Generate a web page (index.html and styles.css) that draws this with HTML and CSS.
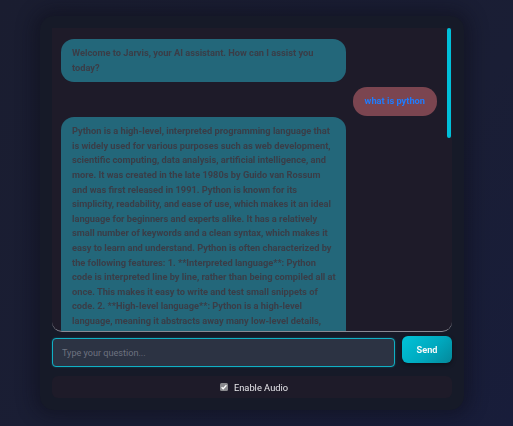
FILE: index.html
```html
<!DOCTYPE html>
<html lang="en">
<head>
<meta charset="utf-8">
<title>Jarvis</title>
<link rel="stylesheet" href="styles.css">
</head>
<body>
<div class="card">
  <div class="chat-wrap">
    <div class="chat">
      <div class="msg bot first">Welcome to Jarvis, your AI assistant. How can I assist you today?</div>
      <div class="row-user"><div class="msg user">what is python</div></div>
      <div class="msg bot">Python is a high-level, interpreted programming language that is widely used for various purposes such as web development, scientific computing, data analysis, artificial intelligence, and more. It was created in the late 1980s by Guido van Rossum and was first released in 1991. Python is known for its simplicity, readability, and ease of use, which makes it an ideal language for beginners and experts alike. It has a relatively small number of keywords and a clean syntax, which makes it easy to learn and understand. Python is often characterized by the following features: 1. **Interpreted language**: Python code is interpreted line by line, rather than being compiled all at once. This makes it easy to write and test small snippets of code. 2. **High-level language**: Python is a high-level language, meaning it abstracts away many low-level details, such as memory management, allowing developers to focus on the logic of their programs. 3. **Object-oriented**: Python supports object-oriented programming, which allows developers to organize code into reusable classes and objects.</div>
    </div>
    <div class="thumb"></div>
  </div>
  <div class="input-row">
    <input class="question" type="text" placeholder="Type your question..." autofocus>
    <button class="send" type="button">Send</button>
  </div>
  <div class="audio">
    <label class="audio-label"><span class="audio-check"><svg viewBox="0 0 8 8" width="8" height="8"><path d="M1.6 4.2 L3.2 5.8 L6.4 2.3" fill="none" stroke="#ffffff" stroke-width="1.3"/></svg></span><span>Enable Audio</span></label>
  </div>
</div>
</body>
</html>
```

FILE: styles.css
```css
* { box-sizing: border-box; }
html, body { height: 100%; }
body {
  margin: 0;
  background: linear-gradient(135deg, #1a1d30 0%, #1a1e35 60%, #181d3a 100%);
  font-family: Roboto, "Noto Sans", Arial, sans-serif;
  overflow: hidden;
}
.card {
  width: 424px;
  margin: 16px 0 0 40px;
  padding: 12px;
  background: #161a28;
  border-radius: 14px;
  box-shadow: 0 0 18px 6px rgba(10, 12, 22, 0.45);
  display: flex;
  flex-direction: column;
}
.chat-wrap {
  position: relative;
}
.chat {
  height: 304px;
  overflow: hidden;
  background: #1e1b29;
  border-bottom: 1px solid #8a8a94;
  border-radius: 0 0 10px 10px;
  padding: 11px 9px 10px 9px;
  display: flex;
  flex-direction: column;
  align-items: flex-start;
}
.thumb {
  position: absolute;
  top: 0;
  right: 1px;
  width: 4px;
  height: 110px;
  background: #00bfd9;
  border-radius: 2px;
}
.msg {
  font-size: 9.25px;
  font-weight: 700;
  line-height: 14.6px;
  color: #3a3d47;
  border-radius: 13px;
}
.bot {
  width: 285px;
  flex-shrink: 0;
  background: #23677a;
  padding: 7px 9.5px 7px 11px;
}
.first { margin-bottom: 5px; }
.row-user {
  width: 100%;
  display: flex;
  justify-content: flex-end;
  margin-bottom: 1px;
}
.user {
  background: #7b4550;
  color: #1f7cff;
  padding: 7px 12px;
  height: 29px;
  white-space: nowrap;
  margin-right: 6px;
  border-radius: 14px;
}
.input-row {
  display: flex;
  align-items: flex-start;
  gap: 7px;
  margin-top: 4px;
}
.question {
  flex: 1;
  height: 29px;
  margin-top: 2px;
  background: #2c3343;
  border: 1px solid #10b0c4;
  border-radius: 4px;
  padding: 0 9px;
  font-family: Roboto, Arial, sans-serif;
  font-size: 9.1px;
  color: #ddd;
  outline: none;
  box-shadow: 0 0 2px rgba(0, 188, 212, 0.4);
}
.question::placeholder { color: #6c7280; }
.send {
  width: 50px;
  height: 27px;
  border: none;
  border-radius: 6px;
  background: linear-gradient(135deg, #00c3d8 0%, #00a9bf 55%, #04889a 100%);
  color: #f2f7f8;
  font-family: Roboto, Arial, sans-serif;
  font-weight: 700;
  font-size: 9.2px;
  box-shadow: 0 2px 4px rgba(0, 0, 0, 0.35);
}
.audio {
  margin-top: 9px;
  height: 22px;
  background: #1e1b29;
  border-radius: 6px;
  display: flex;
  align-items: center;
  justify-content: center;
}
.audio-label {
  display: flex;
  align-items: center;
  gap: 6px;
  font-size: 9.3px;
  color: #e6e6ea;
  margin-left: 4px;
}
.audio-check {
  width: 8px;
  height: 8px;
  background: #8a8a8e;
  border-radius: 1.5px;
  display: flex;
}
```
